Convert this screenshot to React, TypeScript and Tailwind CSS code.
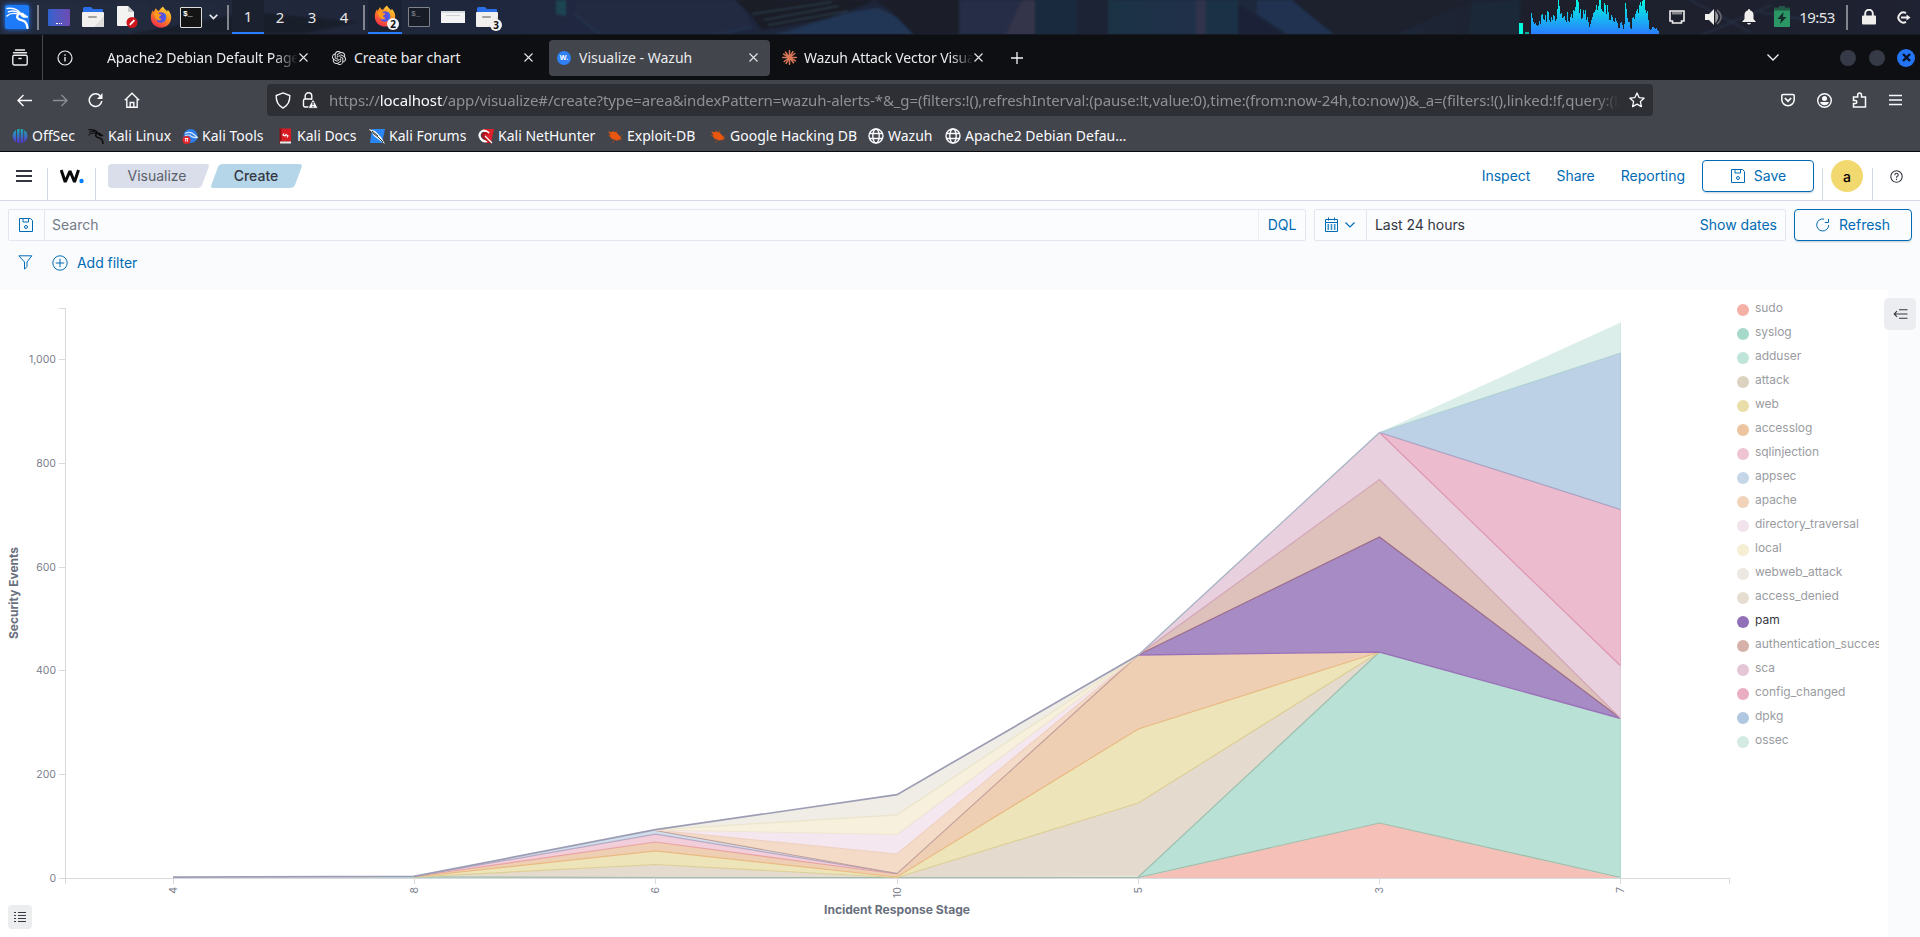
import React from "react";
import { SiOpenai } from "react-icons/si";

/* ---------- small drawings ---------- */

const FirefoxLogo = ({ id }: { id: string }) => (
  <svg width="22" height="22" viewBox="0 0 22 22">
    <defs>
      <linearGradient id={id + "a"} x1="0.8" y1="0" x2="0.2" y2="1">
        <stop offset="0" stopColor="#ffde3e" />
        <stop offset="0.45" stopColor="#ff8a1f" />
        <stop offset="1" stopColor="#f0264f" />
      </linearGradient>
    </defs>
    <path
      d="M13 .5c1 2.200 3 3.200 4 5 .5-.3.7-1 .7-1.800C20 6 21.200 8.500 21.200 11.400 21.200 17 16.700 21.500 11 21.500S.8 17 .8 11.400C.8 8.500 1.700 6 3 4.200l.5 2C4.300 5 5.200 3.800 5.800 2c.6 1.400 1.400 2.300 3.200 2.900C10 3 11.500 1.600 13 .5z"
      fill={"url(#" + id + "a)"}
    />
    <circle cx="11" cy="11.500" r="5.200" fill="#5a4fe0" />
    <path d="M13.500 6.500c1.800 1 3 3 2.700 5.300-.5 2.800-3 4.700-5.800 4.200 2.400-.2 4.200-1.800 4.300-4 0-2-.8-3.600-1.200-5.500z" fill="#3b6ef0" />
    <path d="M3.500 7.500C5.500 6.300 8 6.600 9.300 8l2.200.5c-.3 1.200-2 1.300-2.300 2.500-.2 1 .8 1.800 2.300 1.700-1 1.900-4 2.100-5.300.2C4.900 11.300 4.500 9.300 3.500 7.500z" fill="#ff9a1f" />
  </svg>
);

const Dragon = ({ size, color }: { size: number; color: string }) => (
  <svg width={size} height={size} viewBox="0 0 24 24" fill="none" stroke={color} strokeLinecap="round">
    <path d="M1 2.500C7 2 12 3.500 14.500 7" strokeWidth="1.600" />
    <path d="M2.500 6C7 4.500 12 5.500 15 8" strokeWidth="1.600" />
    <path d="M1 10.500C4 7.500 8 7 13 8.500" strokeWidth="1.500" />
    <path d="M14 7.500c2.500-.5 4.500 0 5.500 1.500l3.500 2.500-3.500.5c-2-.3-3-1-4-2z" fill={color} strokeWidth=".8" />
    <path d="M13 8.500c-2.800 2.800-1 5.500 3 6.200 4 .6 6 3 6.500 8.300" strokeWidth="2.300" />
  </svg>
);

const Folder = () => (
  <svg width="22" height="20" viewBox="0 0 22 20">
    <path d="M1 1.500Q1 0 2.500 0H9l2 2h9a1 1 0 0 1 1 1v5H1z" fill="#2a6fe8" />
    <rect x="0" y="5" width="22" height="15" rx="1" fill="#f1f0ee" />
    <path d="M22 9v10a1 1 0 0 1-1 1h-9z" fill="#dedddb" />
    <rect x="6" y="9" width="9" height="2" rx="1" fill="#a3a3a3" />
  </svg>
);

const Floppy = () => (
  <svg width="16" height="16" viewBox="0 0 16 16" fill="none" stroke="#006bb4">
    <path d="M1.500 1.500h11l2 2v11h-13z M5 1.500v3.500h5.500V1.500" />
    <circle cx="8" cy="10" r="1.500" />
  </svg>
);

const Close = () => (
  <svg width="9" height="9" viewBox="0 0 9 9" stroke="#e6e6e8" strokeWidth="1.100">
    <path d="M.5.5l8 8M8.500.5l-8 8" />
  </svg>
);

const Globe = () => (
  <svg width="16" height="16" viewBox="0 0 16 16" fill="none" stroke="#fbfbfe" strokeWidth="1.400">
    <circle cx="8" cy="8" r="7" />
    <ellipse cx="8" cy="8" rx="3.200" ry="7" />
    <path d="M1.200 5.500h13.600M1.200 10.500h13.600" />
  </svg>
);

const Bug = () => (
  <svg width="16" height="16" viewBox="0 0 16 16">
    <path d="M1 3.500l4 .8 1-1.800.8 1.600 2-.4 4 4.300 2.500 3.500-2.300-1 .3 2.500-1.600-1.600-2 1.400-4.500-2-1 .8.200-1.700L2 8l1.200-1.500L1 3.500z" fill="#e9560f" />
    <path d="M.5 7l3 1M6 15l.5-3M10 2.500L9 5M15.500 7L13 9" stroke="#a9491c" strokeWidth=".8" fill="none" />
  </svg>
);

const Wallpaper = () => (
  <svg className="absolute inset-0 blur-[1px]" width="1920" height="35" viewBox="0 0 1920 35" preserveAspectRatio="none">
    <defs>
      <linearGradient id="wp" x1="0" x2="1">
        <stop offset="0" stopColor="#242c40" />
        <stop offset=".18" stopColor="#20273a" />
        <stop offset=".3" stopColor="#1f2840" />
        <stop offset=".5" stopColor="#1d2439" />
        <stop offset=".7" stopColor="#1e2a3d" />
        <stop offset=".8" stopColor="#1d1f2b" />
        <stop offset="1" stopColor="#1f2232" />
      </linearGradient>
      <linearGradient id="wp2" x1="0" x2="1">
        <stop offset="0" stopColor="#1b3345" />
        <stop offset="1" stopColor="#21304a" />
      </linearGradient>
    </defs>
    <rect x="-5" y="-5" width="1930" height="45" fill="url(#wp)" />
    <path d="M130 34L250 12l110 10-60 12z" fill="#191e2b" />
    <path d="M575 0h165l12 26-40 9H600L574 14z" fill="#222a42" />
    <path d="M556 0h10v16l-10-2z" fill="#1d4452" />
    <path d="M574 14l26 21h115l37-8" stroke="#24415c" fill="none" />
    <path d="M735 0h140l-45 18-68 12-12-16z" fill="#1a1c26" />
    <path d="M752 14l80-12M764 20l74-14M768 25l80-14" stroke="#31515f" fill="none" />
    <path d="M768 36c40-9 60-22 110-28 20 8 30 16 36 28z" fill="#213654" />
    <path d="M875 0h85v36h-45l-25-26z" fill="#1b1d29" />
    <path d="M959 0h76v36h-76z" fill="#252d47" />
    <path d="M1022 0h13v36h-30z" fill="#34344a" />
    <path d="M1035 0h42v36h-42z" fill="#1a2a3e" />
    <path d="M1077 0h31v36h-31z" fill="#1c2335" />
    <path d="M1108 0h88v36h-88z" fill="url(#wp2)" />
    <path d="M1196 0h10v36h-10z" fill="#30334b" />
    <path d="M1206 0h32v36h-32z" fill="#1b3146" />
    <path d="M1238 4l50 32h-50z" fill="#1b2238" />
    <path d="M1257 0h35l44 36h-46l-33-22z" fill="#203250" />
    <path d="M1292 0h180l-80 36h-56z" fill="#1d202d" />
    <path d="M1472 3l48-3v36h-52z" fill="#1a2838" />
    <path d="M1690 0l60 32M1702 35l70-30M1760 12l60 10" stroke="#2d3e57" fill="none" />
  </svg>
);

const barHeights = [
  21, 16, 12, 10, 11, 9, 8, 9, 13, 10, 19, 20, 15, 14, 19, 12, 23, 22, 14, 12, 17, 14, 19, 18, 13, 15, 25, 34, 28, 20, 21, 16, 17, 18,
  14, 12, 22, 13, 12, 17, 20, 16, 24, 23, 27, 35, 34, 32, 21, 25, 15, 16, 24, 20, 24, 14, 17, 12, 7, 10, 14, 17, 21, 22, 24, 29, 24, 28,
  35, 34, 25, 23, 22, 31, 29, 20, 29, 22, 14, 14, 19, 17, 13, 12, 16, 13, 11, 6, 6, 11, 12, 9, 5, 10, 31, 25, 16, 12, 12, 6, 5, 16, 17,
  15, 20, 23, 25, 21, 29, 32, 28, 33, 35, 35, 24, 21, 23, 14, 5, 4, 5, 7, 7, 6, 5, 6, 4, 3,
];

const CpuGraph = () => (
  <svg className="shrink-0" width="141" height="35" viewBox="0 0 141 35" shapeRendering="crispEdges">
    <defs>
      <linearGradient id="cpu" x1="0" y1="0" x2="0" y2="1">
        <stop offset="0" stopColor="#00ffe0" />
        <stop offset="1" stopColor="#2a7cff" />
      </linearGradient>
    </defs>
    <rect x="0" y="23" width="4" height="11" fill="#00ffe0" />
    <rect x="6" y="32" width="4" height="2" fill="#0cab9c" />
    <path
      d={"M12 34" + barHeights.map((h, i) => `V${34 - h}H${13 + i}`).join("") + "V34z"}
      fill="url(#cpu)"
    />
  </svg>
);

/* ---------- desktop panel ---------- */

const Divider = () => <div className="h-[25px] w-[2px] bg-[#83858e]" />;

const DesktopPanel = () => (
  <div className="relative h-[35px] w-full overflow-hidden border-b border-[#161a22] bg-[#1f2637] font-['Noto_Sans',sans-serif]">
    <Wallpaper />
    <div className="relative flex h-[34px] items-center text-[15px] text-[#e6e6e6]">
      <div className="flex w-[34px] justify-center">
        <div className="flex h-[24px] w-[24px] items-center justify-center rounded-[2px] bg-[#1d7bfa] shadow-[0_0_5px_#1d7bfa]">
          <Dragon size={23} color="#ffffff" />
        </div>
      </div>
      <div className="flex w-[8px] justify-center"><Divider /></div>
      <div className="flex w-[34px] justify-center">
        <div className="flex h-[17px] w-[22px] items-end justify-center rounded-[1px] bg-linear-to-r from-[#2d62cf] to-[#6c4bb2] pb-[2px]">
          <div className="h-[1px] w-[6px] border-t border-dotted border-white" />
        </div>
      </div>
      <div className="flex w-[34px] justify-center"><Folder /></div>
      <div className="flex w-[34px] justify-center">
        <svg width="22" height="22" viewBox="0 0 22 22">
          <path d="M2 0h10l6 6v14H2a1 1 0 0 1-1-1V1a1 1 0 0 1 1-1z" fill="#f3f3f2" />
          <path d="M12 0l6 6h-6z" fill="#c9c9c9" />
          <circle cx="16" cy="16.500" r="5.500" fill="#d0161d" />
          <path d="M13.800 18.800l4.600-4.600" stroke="#fff" strokeWidth="1.800" />
        </svg>
      </div>
      <div className="flex w-[34px] justify-center"><FirefoxLogo id="fa" /></div>
      <div className="flex w-[26px] justify-center">
        <div className="h-[21px] w-[22px] rounded-[1px] border border-[#dcdcdc] bg-[#141414] pl-[2px] pt-[2px] font-['Liberation_Mono',monospace] text-[8px] font-bold leading-[8px] text-white">$_</div>
      </div>
      <div className="flex w-[19px] justify-center">
        <svg width="9" height="6" viewBox="0 0 9 6" fill="none" stroke="#eee" strokeWidth="1.600"><path d="M.7.7l3.800 3.800L8.300.7" /></svg>
      </div>
      <div className="flex w-[9px] justify-center"><Divider /></div>
      <div className="flex h-full w-[32px] items-center justify-center border-b-2 border-[#2a7cff] bg-[#1c2130]">1</div>
      <div className="flex w-[32px] justify-center">2</div>
      <div className="flex w-[32px] justify-center">3</div>
      <div className="flex w-[32px] justify-center">4</div>
      <div className="flex w-[8px] justify-center"><Divider /></div>
      <div className="flex h-full w-[34px] items-center justify-center border-b-2 border-[#2a7cff] bg-[#1b2233]">
        <div className="relative">
          <FirefoxLogo id="fb" />
          <span className="absolute left-[13px] top-[13px] flex h-[12px] w-[12px] items-center justify-center rounded-full bg-[#f2f2f2] text-[10px] font-bold leading-none text-[#111]">2</span>
        </div>
      </div>
      <div className="flex w-[34px] justify-center">
        <div className="h-[20px] w-[22px] rounded-[1px] border border-[#80828a] bg-[#171c27] pl-[2px] pt-[2px] font-['Liberation_Mono',monospace] text-[8px] leading-[8px] text-[#8a8c93]">$_</div>
      </div>
      <div className="flex w-[34px] justify-center">
        <div className="h-[12px] w-[24px] border-t-2 border-[#d8dde0] bg-[#f3f4f3] pt-[2px]"><div className="mx-auto h-[1px] w-[14px] bg-[#cfd0d0]" /></div>
      </div>
      <div className="relative flex w-[34px] justify-center">
        <Folder />
        <span className="absolute left-[20px] top-[12px] flex h-[12px] w-[12px] items-center justify-center rounded-full bg-[#f2f2f2] text-[10px] font-bold leading-none text-[#111]">3</span>
      </div>
      <div className="grow" />
      <CpuGraph />
      <div className="flex w-[34px] justify-center">
        <svg width="16" height="14" viewBox="0 0 16 14" fill="none" stroke="#f0efee">
          <path d="M1 1h14v10h-2.500v2h-9v-2H1z" strokeWidth="1.600" />
          <path d="M4 1.500v3M6 1.500v3M8 1.500v3M10 1.500v3M12 1.500v3" />
        </svg>
      </div>
      <div className="flex w-[39px] justify-center">
        <svg width="18" height="18" viewBox="0 0 18 18">
          <path d="M0 6h4l5-5v16l-5-5H0z" fill="#f0efee" />
          <path d="M11 5q3 4 0 8z" fill="#9a9a9c" stroke="#9a9a9c" strokeWidth="1.500" />
          <path d="M12 2q8 7 0 14" fill="none" stroke="#66666c" strokeWidth="1.700" />
        </svg>
      </div>
      <div className="flex w-[31px] justify-center">
        <svg width="14" height="16" viewBox="0 0 14 16" fill="#f0efee"><path d="M7 0q1 0 1 1.200Q11.500 2.200 11.500 6v4L14 13H0l2.500-3V6Q2.500 2.200 6 1.200 6 0 7 0zM5 14h4q-.6 1.500-2 1.500T5 14z" /></svg>
      </div>
      <div className="flex w-[36px] justify-center">
        <svg width="16" height="22" viewBox="0 0 16 22"><rect x="5" width="6" height="3" fill="#24574a" /><path d="M0 3h16v17a1 1 0 0 1-1 1H1a1 1 0 0 1-1-1z" fill="#2c9766" /><path d="M0 1.500h16v3H0z" fill="#225944" /><path d="M9.500 6L3.500 13H7l-1 5 6.500-7H9z" fill="#152c2b" /></svg>
      </div>
      <div className="flex w-[34px] justify-center whitespace-nowrap text-[15px] tracking-[-0.6px]">19:53</div>
      <div className="flex w-[25px] justify-center"><Divider /></div>
      <div className="flex w-[19px] justify-center">
        <svg width="14" height="16" viewBox="0 0 14 16"><path d="M3.200 7V4.500a3.800 3.800 0 0 1 7.600 0V7" fill="none" stroke="#f0efee" strokeWidth="1.900" /><rect y="6.500" width="14" height="9" rx="1" fill="#f0efee" /></svg>
      </div>
      <div className="flex w-[42px] justify-end pr-[9px]">
        <svg width="15" height="13" viewBox="0 0 15 13" fill="none" stroke="#f0efee" strokeWidth="2"><path d="M10 2.200A5 5 0 1 0 10 10.800" /><path d="M5 6.500h6" /><path d="M10.500 3.500l4 3-4 3z" fill="#f0efee" stroke="none" /></svg>
      </div>
    </div>
  </div>
);

/* ---------- browser chrome ---------- */

type TabProps = { title: string; icon?: React.ReactNode; active?: boolean; fade?: boolean };
const Tab = ({ title, icon, active, fade }: TabProps) => (
  <div className="w-[225px] px-[2px]">
    <div className={"flex h-[36px] items-center rounded-[4px] pl-[8px] pr-[12px] " + (active ? "bg-[#42454c]" : "")}>
      {icon && <span className="mr-[8px] flex w-[14px] shrink-0 justify-center">{icon}</span>}
      <span className={"min-w-0 grow overflow-hidden whitespace-nowrap " + (fade ? "tracking-[-0.12px] mask-r-from-87% mask-r-to-100%" : "")}>{title}</span>
      <span className="shrink-0 pl-[1px]"><Close /></span>
    </div>
  </div>
);

const TabBar = () => (
  <div className="flex h-[45px] items-center bg-[#0e0f12] text-[14px] text-[#ececee]">
    <div className="flex h-full w-[43px] items-center justify-center border-r border-[#45474d] pr-[2px]">
      <svg width="16" height="17" viewBox="0 0 16 17" fill="none" stroke="#ececee" strokeWidth="1.400">
        <path d="M3.500 1h9M1.500 3.700h13" strokeLinecap="round" />
        <rect x=".8" y="6.200" width="14.400" height="9.800" rx="1.500" />
        <path d="M6.300 9.500h3.400" />
      </svg>
    </div>
    <div className="flex w-[54px] items-center justify-center pr-[11px]">
      <svg width="16" height="16" viewBox="0 0 16 16" fill="none" stroke="#ececee" strokeWidth="1.200"><circle cx="8" cy="8" r="7" /><path d="M8 7v4.500M8 4.200v1.500" strokeWidth="1.400" /></svg>
    </div>
    <Tab title="Apache2 Debian Default Page" fade />
    <Tab title="Create bar chart" icon={<SiOpenai size={14} />} />
    <Tab
      title="Visualize - Wazuh"
      active
      icon={<span className="flex h-[14px] w-[14px] shrink-0 items-center justify-center rounded-full bg-[#2f7ff5] text-[7px] font-bold leading-none text-white">W.</span>}
    />
    <Tab
      title="Wazuh Attack Vector Visualization"
      fade
      icon={
        <svg className="shrink-0" width="15" height="15" viewBox="0 0 15 15" stroke="#d97757" strokeWidth="1.500" strokeLinecap="round">
          <path d="M7.500 7.500V.7M7.500 7.500v6.800M7.500 7.500H.7M7.500 7.500h6.800M7.500 7.500l3.400-5.900M7.500 7.500l-3.400 5.900M7.500 7.500L1.600 4.100M7.500 7.500l5.900 3.400M7.500 7.500l5.300-4M7.500 7.500l-5.300 4M7.500 7.500l-4-5.300M7.500 7.500l4 5.300" />
        </svg>
      }
    />
    <div className="flex w-[40px] justify-center">
      <svg width="12" height="12" viewBox="0 0 12 12" stroke="#f4f4f6" strokeWidth="1.300"><path d="M6 0v12M0 6h12" /></svg>
    </div>
    <div className="grow" />
    <svg className="mr-[61px]" width="12" height="7" viewBox="0 0 12 7" fill="none" stroke="#f4f4f6" strokeWidth="1.300"><path d="M.5.5L6 6l5.500-5.500" /></svg>
    <div className="mr-[13px] h-[16px] w-[16px] rounded-full bg-[#353a46]" />
    <div className="mr-[12px] h-[16px] w-[16px] rounded-full bg-[#353a46]" />
    <div className="mr-[5px] flex h-[18px] w-[18px] items-center justify-center rounded-full bg-[#2475f6]">
      <svg width="9" height="9" viewBox="0 0 9 9" stroke="#0b1020" strokeWidth="2.400"><path d="M1 1l7 7M8 1L1 8" /></svg>
    </div>
  </div>
);

const NavBar = () => (
  <div className="flex h-[40px] items-center text-[#fbfbfe]">
    <div className="flex w-[48px] justify-center"><svg width="15" height="13" viewBox="0 0 15 13" fill="none" stroke="#fbfbfe" strokeWidth="1.400"><path d="M15 6.500H1M6.500 1L1 6.500 6.500 12" /></svg></div>
    <div className="flex w-[24px] justify-center"><svg width="15" height="13" viewBox="0 0 15 13" fill="none" stroke="#8b8d92" strokeWidth="1.400"><path d="M0 6.500h14M8.500 1L14 6.500 8.500 12" /></svg></div>
    <div className="flex w-[47px] justify-center"><svg width="15" height="15" viewBox="0 0 15 15" fill="none" stroke="#fbfbfe" strokeWidth="1.500"><path d="M12.300 3A6.300 6.300 0 1 0 13.800 8" /><path d="M14.500 0v6H9z" fill="#fbfbfe" stroke="none" /></svg></div>
    <div className="flex w-[25px] justify-center"><svg width="16" height="16" viewBox="0 0 16 16" fill="none" stroke="#fbfbfe" strokeWidth="1.400"><path d="M.8 8.300L8 1.200l7.200 7.100M2.800 7v8.200h10.400V7" /><path d="M6.200 15v-4.500h3.600V15" /></svg></div>
    <div className="ml-[123px] flex h-[32px] w-[1386px] items-center rounded-[4px] bg-[#2e2f34]">
      <svg className="ml-[8px]" width="16" height="17" viewBox="0 0 16 17" fill="none" stroke="#fbfbfe" strokeWidth="1.400"><path d="M8 .9l6.800 2.600c.2 5.800-1.800 10-6.800 12.700C3 13.500 1 9.300 1.200 3.500z" /></svg>
      <svg className="ml-[11px]" width="16" height="17" viewBox="0 0 16 17" fill="none" stroke="#fbfbfe" strokeWidth="1.400"><path d="M7 15H3a1.500 1.500 0 0 1-1.500-1.500v-5A1.500 1.500 0 0 1 3 7h7.500M3.200 7V4a3.300 3.300 0 0 1 6.600 0v4" /><path d="M11 7l5 9.300H6z" fill="#fbfbfe" stroke="#2e2f34" strokeWidth=".8" /><path d="M11 10v3M11 14v1.200" stroke="#2e2f34" strokeWidth="1.200" /></svg>
      <span className="ml-[11px] w-[1291px] overflow-hidden whitespace-nowrap mask-r-from-98% mask-r-to-100% text-[15px] tracking-[-0.11px] text-[#8f9095]">
        https://<span className="text-[#fbfbfe]">localhost</span>/app/visualize#/create?type=area&amp;indexPattern=wazuh-alerts-*&amp;_g=(filters:!(),refreshInterval:(pause:!t,value:0),time:(from:now-24h,to:now))&amp;_a=(filters:!(),linked:!f,query:(language:kuery,query:''))
      </span>
      <svg className="ml-[9px]" width="16" height="16" viewBox="0 0 16 16" fill="none" stroke="#fbfbfe" strokeWidth="1.300" strokeLinejoin="round"><path d="M8 1l2.100 4.600 5 .6-3.700 3.400 1 5L8 12.100l-4.400 2.500 1-5L.9 6.200l5-.6z" /></svg>
    </div>
    <div className="grow" />
    <svg className="mr-[22px]" width="14" height="14" viewBox="0 0 14 14" fill="none" stroke="#fbfbfe" strokeWidth="1.500"><path d="M2 1.500h10a1.200 1.200 0 0 1 1.200 1.200V6.500a6.200 6.200 0 0 1-12.400 0V2.700A1.200 1.200 0 0 1 2 1.500z" /><path d="M3.800 5L7 8.200 10.200 5" strokeWidth="1.700" /></svg>
    <svg className="mr-[20px]" width="15" height="15" viewBox="0 0 15 15"><circle cx="7.500" cy="7.500" r="6.800" fill="none" stroke="#fbfbfe" strokeWidth="1.400" /><circle cx="7.500" cy="5.500" r="2.500" fill="#fbfbfe" /><path d="M3 9h9q-1.200 3.300-4.500 3.300T3 9z" fill="#fbfbfe" /></svg>
    <svg className="mr-[22px]" width="15" height="16" viewBox="0 0 15 16" fill="none" stroke="#fbfbfe" strokeWidth="1.500"><path d="M1.500 5h4.200V3a1.900 1.900 0 0 1 3.800 0v2h4v10h-12v-3.600h1.800a1.500 1.500 0 0 0 0-3H1.500z" /></svg>
    <svg className="mr-[18px]" width="13" height="12" viewBox="0 0 13 12" stroke="#fbfbfe" strokeWidth="1.300"><path d="M0 1.500h13M0 6h13M0 10.500h13" /></svg>
  </div>
);

const BookmarkBar = () => (
  <div className="flex h-[31px] items-center whitespace-nowrap pl-[12px] text-[14px] text-[#fbfbfe] [&_svg]:mr-[4px] [&_svg]:shrink-0">
    <div className="flex w-[76px] items-center">
      <svg width="16" height="16" viewBox="0 0 16 16">
        <defs><linearGradient id="off" x1="0" y1="0" x2="0" y2="1"><stop offset="0" stopColor="#17b3b5" /><stop offset="1" stopColor="#5b2ed8" /></linearGradient></defs>
        <path d="M4 2v12Q.7 12 .7 8T4 2zM5 1.500l2.500-.8v14.600L5 14.500zM8.700.7l2.500.8v13l-2.500.8zM12.200 2q3.200 2 3.200 6t-3.200 6z" fill="url(#off)" />
      </svg>
      OffSec
    </div>
    <div className="flex w-[94px] items-center"><Dragon size={16} color="#0b0b0c" />Kali Linux</div>
    <div className="flex w-[95px] items-center">
      <svg width="16" height="16" viewBox="0 0 16 16"><circle cx="8.500" cy="8" r="7" fill="#2b7de9" /><path d="M3 5.500Q8 3 12 6.500t3.300 3Q11 10 8.500 8M3 7.500q4-1 6 0" fill="none" stroke="#d7e8ff" strokeWidth="1.200" /><circle cx="4.500" cy="12" r="4" fill="#e4262c" /><path d="M2.800 10.500h3.400M3.700 10.500v3.200M5.400 10.500v3.200" stroke="#fff" strokeWidth=".9" /></svg>
      Kali Tools
    </div>
    <div className="flex w-[92px] items-center">
      <svg width="16" height="16" viewBox="0 0 16 16"><path d="M3 .5h11v13H3z" fill="#d91c22" /><path d="M2.500.5h2v15h-2z" fill="#8f1014" /><path d="M3 13.500h11v2H3z" fill="#eceaea" /><path d="M7 5.500L6 7l2 1 1-1.500 2 1.500-1 1.500" fill="none" stroke="#fff" strokeWidth="1.200" /></svg>
      Kali Docs
    </div>
    <div className="flex w-[109px] items-center">
      <svg width="16" height="16" viewBox="0 0 16 16"><path d="M3 1h13l-3 14H1z" fill="#2a86f2" /><path d="M0 1l6 2 6 6 4 7-7-5-4-3z" fill="#fff" /><path d="M1 3l8 6 5 5M3 3l6 5" stroke="#14202d" strokeWidth=".9" fill="none" /></svg>
      Kali Forums
    </div>
    <div className="flex w-[129px] items-center">
      <svg width="16" height="16" viewBox="0 0 16 16"><path d="M5 1h11l-3 14H8z" fill="#e0202a" /><path d="M11 5Q6 1 3 4T3 11t8 1" fill="none" stroke="#fff" strokeWidth="2.200" /><path d="M10 6Q6 4 5 6t1 4l7 5" fill="none" stroke="#b3131c" strokeWidth="2" /><path d="M7 8l7 7" stroke="#fff" strokeWidth="1.200" /></svg>
      Kali NetHunter
    </div>
    <div className="flex w-[103px] items-center"><Bug />Exploit-DB</div>
    <div className="flex w-[158px] items-center"><Bug />Google Hacking DB</div>
    <div className="flex w-[77px] items-center"><Globe />Wazuh</div>
    <div className="flex items-center"><Globe />Apache2 Debian Defau…</div>
  </div>
);

/* ---------- application header ---------- */

const AppHeader = () => (
  <div className="flex h-[49px] items-center border-b border-[#d3dae6] bg-white text-[14px]">
    <svg className="ml-[16px]" width="16" height="12" viewBox="0 0 16 12" stroke="#343741" strokeWidth="2"><path d="M0 1h16M0 6h16M0 11h16" /></svg>
    <div className="ml-[15px] h-[32px] w-px self-end bg-[#d3dae6]" />
    <svg className="ml-[12px]" width="24" height="15" viewBox="0 0 24 15">
      <path d="M1.200 1l4 12L10 2l4.500 11 4-12" fill="none" stroke="#0a0a0a" strokeWidth="3" strokeLinejoin="bevel" />
      <circle cx="21.500" cy="12" r="2.200" fill="#0080ff" />
    </svg>
    <div className="ml-[11px] h-[32px] w-px self-end bg-[#d3dae6]" />
    <div className="relative ml-[12px] flex h-[24px] w-[101px] items-center justify-center text-[#5a606b]">
      <svg className="absolute inset-0" width="101" height="24" viewBox="0 0 101 24"><path d="M4 0h94q4 0 2.500 3.500L94 21q-1.200 3-5 3H4q-4 0-4-4V4q0-4 4-4z" fill="#d9deea" /></svg>
      <span className="relative pb-[1px] pr-[3px]">Visualize</span>
    </div>
    <div className="relative ml-[2px] flex h-[24px] w-[91px] items-center justify-center font-medium text-[#343741]">
      <svg className="absolute inset-0" width="91" height="24" viewBox="0 0 91 24"><path d="M12 0h76q4 0 2.500 3.500L84 21q-1.200 3-5 3H3q-4 0-2.500-3.500L7 3q1.200-3 5-3z" fill="#b5d5e8" /></svg>
      <span className="relative pb-[1px] pr-[1px]">Create</span>
    </div>
    <div className="grow" />
    <span className="pb-[2px] text-[#006bb4]">Inspect</span>
    <span className="ml-[26px] pb-[2px] text-[#006bb4]">Share</span>
    <span className="ml-[26px] pb-[2px] text-[#006bb4]">Reporting</span>
    <button className="ml-[17px] flex h-[32px] w-[112px] items-center justify-center gap-[8px] rounded-[4px] border border-[#006bb4] pb-[1px] text-[#006bb4] shadow-[0_2px_2px_-1px_rgba(54,97,126,0.3)]">
      <Floppy />Save
    </button>
    <div className="ml-[8px] h-[32px] w-px self-end bg-[#d3dae6]" />
    <div className="ml-[8px] flex h-[32px] w-[32px] items-center justify-center rounded-full bg-[#f1d86f] font-medium text-black">a</div>
    <div className="ml-[9px] h-[32px] w-px self-end bg-[#d3dae6]" />
    <svg className="ml-[17px] mr-[17px]" width="13" height="13" viewBox="0 0 13 13" fill="none" stroke="#343741" strokeWidth="1.100"><circle cx="6.500" cy="6.500" r="5.700" /><path d="M4.800 5.200q0-1.900 1.700-1.900t1.700 1.600q0 .9-.9 1.400-.8.500-.8 1.400M6.500 8.700v1.200" /></svg>
  </div>
);

const QueryBar = () => (
  <div className="h-[89px] bg-[#fafbfd] px-[8px] pt-[8px] text-[14px]">
    <div className="flex h-[32px]">
      <div className="flex w-[1298px] items-center rounded-[2px] border border-[#e3e6ef] bg-[#fbfcfd]">
        <div className="flex h-full w-[36px] items-center justify-center border-r border-[#e3e6ef] pr-[1px]"><Floppy /></div>
        <span className="grow pb-[2px] pl-[7px] text-[#757b87]">Search</span>
        <div className="flex h-full w-[47px] items-center justify-center border-l border-[#eceff5] pb-[1px] text-[#006bb4]">DQL</div>
      </div>
      <div className="ml-[8px] flex w-[472px] items-center rounded-[2px] border border-[#e3e6ef] bg-[#fbfcfd]">
        <div className="flex h-full w-[52px] items-center justify-center gap-[6px] border-r border-[#e3e6ef] pr-[2px]">
          <svg width="15" height="16" viewBox="0 0 15 16" fill="none" stroke="#006bb4"><path d="M1.500 2.500h12v12h-12zM1.500 5.500h12M4.500.5v3M10.500.5v3" /><path d="M3.500 8h8M3.500 10h8M3.500 12h8" strokeDasharray="1.600 1.600" strokeWidth="1.300" /></svg>
          <svg width="10" height="6" viewBox="0 0 10 6" fill="none" stroke="#006bb4" strokeWidth="1.200"><path d="M.5.5L5 5 9.500.5" /></svg>
        </div>
        <span className="grow pb-[2px] pl-[8px] tracking-[-0.05px] text-[#343741]">Last 24 hours</span>
        <span className="pb-[2px] pr-[8px] text-[#006bb4]">Show dates</span>
      </div>
      <button className="ml-[8px] flex w-[118px] items-center justify-center gap-[9px] rounded-[4px] border border-[#006bb4] bg-[#fbfcfd] pb-[1px] text-[#006bb4] shadow-[0_2px_2px_-1px_rgba(54,97,126,0.3)]">
        <svg width="14" height="14" viewBox="0 0 14 14" fill="none" stroke="#006bb4"><path d="M8 1.100A6 6 0 1 0 12.700 7" /><path d="M12.500.8v3.700H8.800" /></svg>
        Refresh
      </button>
    </div>
    <div className="flex h-[43px] items-center pl-[10px] tracking-[-0.05px] text-[#006bb4]">
      <svg width="15" height="15" viewBox="0 0 15 15" fill="none" stroke="#006bb4" strokeLinejoin="round"><path d="M.8.8h13L9 7v4.500l-2.500 2.700V7z" /></svg>
      <svg className="ml-[19px] mr-[9px]" width="16" height="16" viewBox="0 0 16 16" fill="none" stroke="#006bb4"><circle cx="8" cy="8" r="7.200" /><path d="M8 3.800v8.400M3.800 8h8.400" /></svg>
      Add filter
    </div>
  </div>
);

/* ---------- chart ---------- */

const xs = [173, 414.3, 655.5, 897, 1138.3, 1379.5, 1620.7];
const xLabels = ["4", "8", "6", "10", "5", "3", "7"];

// Each layer's upper edge, bottom layer first; a layer fills down to the edge before it.
const layers: { fill: string; top: number[] }[] = [
  { fill: "#f5c0b7", top: [588, 588, 588, 588, 588, 533, 588] },
  { fill: "#b9e1d6", top: [588, 587, 587.5, 587.5, 586.5, 362, 428.5] },
  { fill: "#e4dbce", top: [588, 587, 574.5, 587.3, 513, 362, 428.5] },
  { fill: "#ede4ba", top: [588, 587, 560.8, 587, 439, 362, 428.5] },
  { fill: "#efcfb4", top: [588, 586.8, 552, 583.6, 365, 362, 428.5] },
  { fill: "#f2cdda", top: [588, 586.5, 544.2, 583.5, 365, 362, 428.5] },
  { fill: "#cfdeea", top: [588, 586.3, 540, 583.3, 365, 362, 428.5] },
  { fill: "#f4dbc8", top: [588, 586.3, 540, 564, 365, 362, 428.5] },
  { fill: "#f5e7ef", top: [588, 586.3, 540, 544.5, 365, 362, 428.5] },
  { fill: "#f6f0dc", top: [588, 586.3, 540, 524.8, 365, 362, 428.5] },
  { fill: "#f0ede6", top: [588, 586.3, 540, 505, 365, 362, 428.5] },
  { fill: "#a78bc5", top: [588, 586.3, 540, 505, 365, 247, 428.5] },
  { fill: "#ddc1ba", top: [588, 586.3, 540, 505, 365, 189.5, 428.5] },
  { fill: "#e9d0df", top: [588, 586.3, 540, 505, 365, 142.5, 376] },
  { fill: "#ecbbcd", top: [588, 586.3, 540, 505, 365, 142.5, 219.5] },
  { fill: "#bcd1e5", top: [588, 586.3, 540, 505, 365, 142.5, 63] },
  { fill: "#dbeee9", top: [588, 586.3, 540, 505, 365, 142.5, 32.5] },
];

const toLine = (ys: number[]) => ys.map((y, i) => `${xs[i]},${y}`).join(" ");
const base = [588, 588, 588, 588, 588, 588, 588];

// Segments over which two neighbouring layers are separated by a visible edge.
const edges: { c: string; d: string; w?: number }[] = [
  { c: "#a3bba9", d: "M414 587L655.500 587.500 897 587.500 1138.300 587.500 1379.500 533 1620.700 587.500" },
  { c: "#9fbfae", d: "M1138.300 587L1379.500 362" },
  { c: "#ddce94", d: "M414 587L655.500 574.500 897 587.500 1138.300 513 1379.500 362" },
  { c: "#e9b980", d: "M414 587L655.500 560.800 897 587 1138.300 439 1379.500 362" },
  { c: "#e8a3a0", d: "M414 586.500L655.500 552 897 584" },
  { c: "#b9a9c4", d: "M414 586.500L655.500 544.200 897 583.600" },
  { c: "#c39f99", d: "M655.500 540.500L897 583.600 1138.300 365" },
  { c: "#efd0c1", d: "M655.500 540L897 564 1138.300 365" },
  { c: "#f0e3d2", d: "M655.500 540L897 544.500 1138.300 365" },
  { c: "#ebe4cb", d: "M655.500 540L897 524.800 1138.300 365" },
  { c: "#9a72b9", d: "M1138.300 365L1379.500 362 1620.700 428.500", w: 1.4 },
  { c: "#9a6a88", d: "M1138.300 365L1379.500 247 1620.700 428.500" },
  { c: "#d3a6b7", d: "M1138.300 365L1379.500 189.500 1620.700 428.500" },
  { c: "#dd96b2", d: "M1379.500 142.500L1620.700 376" },
  { c: "#a7a0c2", d: "M1379.500 142.500L1620.700 219.500" },
  { c: "#afcfd6", d: "M1379.500 142.500L1620.700 63" },
  { c: "#9c9db4", d: "M173 587.200L414 586.300 655.500 539.700 897 504.700 1138.300 365", w: 1.7 },
  { c: "#a3b1c2", d: "M1138.300 365L1379.500 142.500" },
];

const yTicks: [string, number][] = [["1,000", 69.5], ["800", 173.5], ["600", 277.5], ["400", 380.5], ["200", 484.5], ["0", 588.5]];

const Chart = () => (
  <svg width="1736" height="647" viewBox="0 0 1736 647" className="shrink-0 font-['Inter',sans-serif]">
    {layers.map((l, i) => {
      const under = i === 0 ? base : layers[i - 1].top;
      const back = under.map((y, k) => `${xs[k]},${y}`).reverse().join(" ");
      return <polygon key={i} points={toLine(l.top) + " " + back} fill={l.fill} />;
    })}
    {edges.map((e, i) => (
      <path key={i} d={e.d} fill="none" stroke={e.c} strokeWidth={e.w ?? 1.2} />
    ))}
    <path d="M1620.500 32.500V63" stroke="#d3eae4" />
    <path d="M1620.500 63V219.500" stroke="#b0c8df" />
    <path d="M1620.500 219.500V376" stroke="#e7b0c5" />
    <path d="M1620.500 376V428.500" stroke="#e3c6d8" />
    <path d="M1620.500 428.500V588" stroke="#acd9cc" />
    <g stroke="#d9dadd" fill="none" shapeRendering="crispEdges">
      <path d="M59 18.500H65.500V594" />
      <path d="M59 588.500H1729.500V594" />
      {yTicks.map(([t, y]) => <path key={t} d={`M59 ${y}H65`} />)}
      {xs.map((x) => <path key={x} d={`M${Math.floor(x) + 0.5} 588V594`} />)}
    </g>
    <g fill="#7b808c" fontSize="10.500">
      {yTicks.map(([t, y]) => <text key={t} x="56" y={y + 3} textAnchor="end">{t}</text>)}
      {xs.map((x, i) => (
        <text key={x} transform={`translate(${x + 3.5} 597) rotate(-90)`} textAnchor="end">{xLabels[i]}</text>
      ))}
    </g>
    <g fill="#69707d" fontSize="12" fontWeight="700">
      <text transform="translate(18 303) rotate(-90)" textAnchor="middle" textLength="92" lengthAdjust="spacingAndGlyphs">Security Events</text>
      <text x="897" y="623.500" textAnchor="middle" textLength="146" lengthAdjust="spacingAndGlyphs">Incident Response Stage</text>
    </g>
  </svg>
);

const legend: [string, string][] = [
  ["sudo", "#f5b0a5"], ["syslog", "#a6d9ca"], ["adduser", "#bfe4d9"], ["attack", "#dcd2c0"], ["web", "#eadea8"],
  ["accesslog", "#ecc5a0"], ["sqlinjection", "#eec4d3"], ["appsec", "#c4d6e8"], ["apache", "#f1d3b9"], ["directory_traversal", "#f2e2eb"],
  ["local", "#f5eed3"], ["webweb_attack", "#ece8e1"], ["access_denied", "#e5ddd0"], ["pam", "#9170b8"], ["authentication_success", "#d6b1aa"],
  ["sca", "#e5c6d7"], ["config_changed", "#e9aec2"], ["dpkg", "#afc7df"], ["ossec", "#d4ebe4"],
];

const Visualization = () => (
  <div className="flex h-[647px] bg-white">
    <div className="relative w-[1736px] shrink-0">
      <Chart />
      <button className="absolute left-[8px] top-[615px] flex h-[24px] w-[24px] items-center justify-center rounded-[4px] bg-[#ebedef]">
        <svg width="12" height="10" viewBox="0 0 12 10" stroke="#343741" shapeRendering="crispEdges"><path d="M0 .5h2M4 .5h8M0 3.500h2M4 3.500h8M0 6.500h2M4 6.500h8M0 9.500h2M4 9.500h8" /></svg>
      </button>
    </div>
    <ul className="w-[143px] overflow-hidden pt-[6px] tracking-[-0.03px]">
      {legend.map(([name, color]) => (
        <li key={name} className={"flex h-[24px] items-start whitespace-nowrap text-[12px] leading-[24px] " + (name === "pam" ? "text-[#343741]" : "text-[#9a9ca2]")}>
          <svg className="ml-[1px] mr-[6px] mt-[8px] shrink-0" width="12" height="12"><circle cx="6" cy="6" r="6" fill={color} /></svg>
          {name}
        </li>
      ))}
    </ul>
    <div className="w-[9px]" />
    <div className="w-[32px] grow bg-[#fafbfd] pt-[8px]">
      <button className="-ml-[4px] flex h-[32px] w-[32px] items-center justify-center rounded-[5px] bg-[#ecedf0]">
        <svg width="15" height="10" viewBox="0 0 15 10" fill="none" stroke="#343741" strokeWidth="1.100"><path d="M6 .8h8.500M1 5h13.500M6 9.200h8.500M4 2.200L1.200 5 4 7.800" /></svg>
      </button>
    </div>
  </div>
);

export default function App() {
  return (
    <div className="flex h-[937px] w-[1920px] flex-col overflow-hidden bg-white">
      <DesktopPanel />
      <div className="bg-[#42454c] font-['Noto_Sans',sans-serif]">
        <TabBar />
        <NavBar />
        <BookmarkBar />
      </div>
      <div className="h-[1px] bg-[#0a0a0c]" />
      <div className="font-['Inter',sans-serif]">
        <AppHeader />
        <QueryBar />
        <Visualization />
      </div>
    </div>
  );
}
